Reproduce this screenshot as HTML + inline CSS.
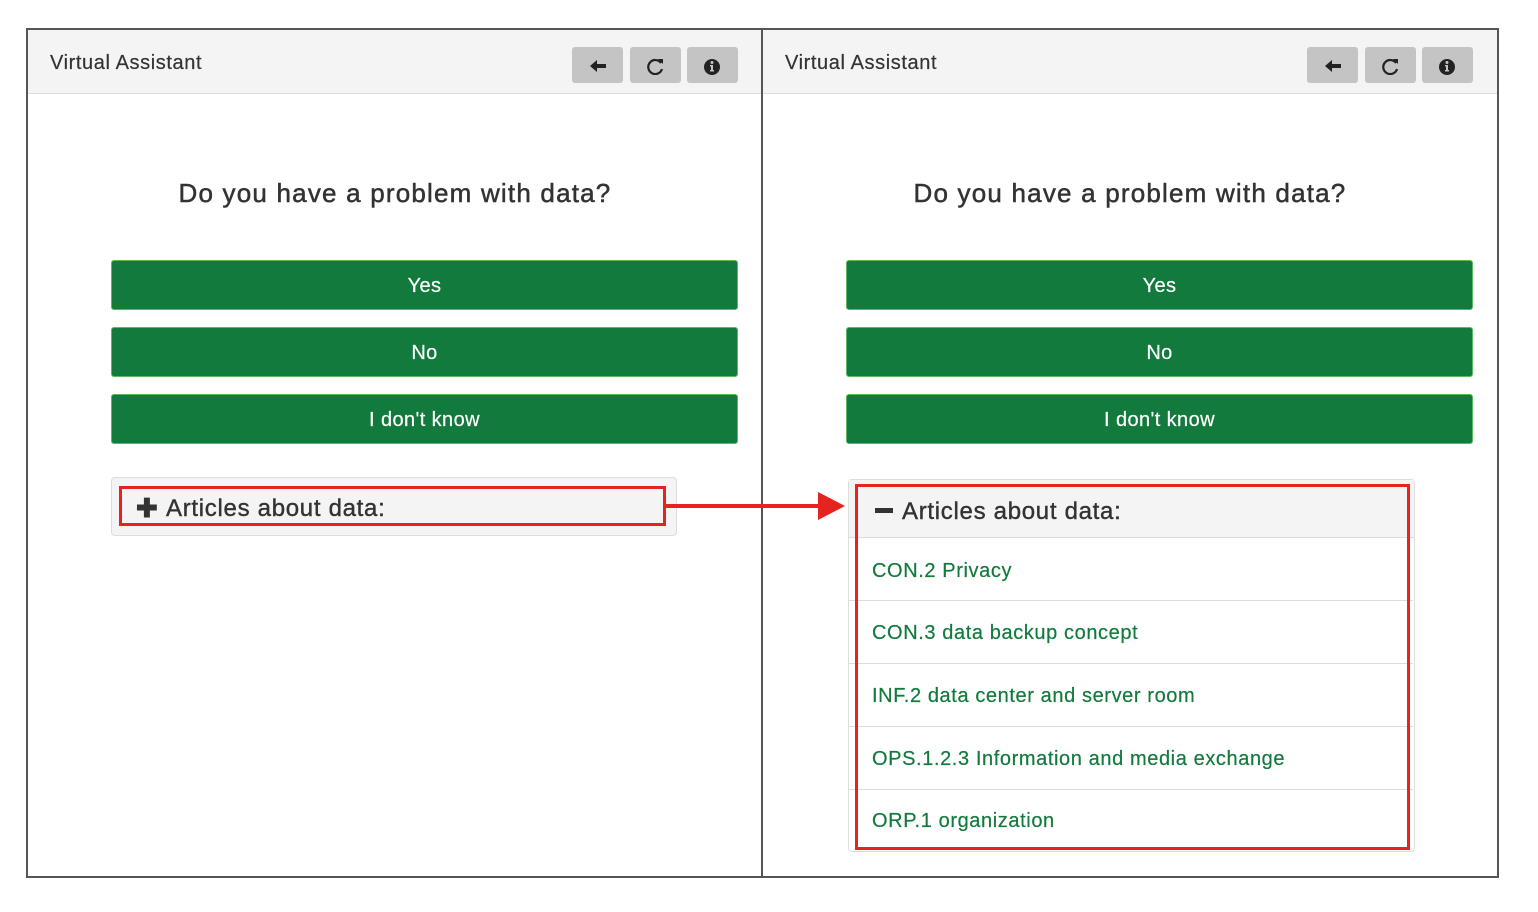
<!DOCTYPE html>
<html><head><meta charset="utf-8"><style>
*{box-sizing:border-box;margin:0;padding:0}
body{width:1538px;height:912px;background:#fff;position:relative;font-family:"Liberation Sans",Arial,sans-serif;overflow:hidden;color:#333}
.a{position:absolute}
.frame{left:26px;top:28px;width:1473px;height:850px;border:2px solid #555}
.div{left:761px;top:28px;width:2px;height:850px;background:#555}
.hdr{top:30px;height:64px;background:#f4f4f4;border-bottom:1px solid #ddd}
.ht{font-size:20px;top:52px;color:#333;letter-spacing:0.6px;-webkit-text-stroke:0.2px #333}
.ib{top:47px;width:51px;height:36px;background:#c4c4c4;border-radius:3px}
.ib svg{position:absolute;left:16px;top:10px}
.q{top:178px;font-size:26px;text-align:center;width:734px;letter-spacing:1.2px;-webkit-text-stroke:0.5px #333}
.gb{height:50px;width:627px;background:#127a3c;border:1px solid #5cb85c;border-radius:3px;color:#fff;font-size:20px;text-align:center;line-height:51px;letter-spacing:0.4px;-webkit-text-stroke:0.2px #fff}
.box{border:1px solid #ddd;border-radius:4px;background:#fff}
.red{border:3px solid #e5231f}
.lk{color:#127a3c;font-size:20px;left:872px;letter-spacing:0.6px;-webkit-text-stroke:0.2px #127a3c}
.sep{left:849px;width:564px;height:1px;background:#ddd}
.ah{font-size:24px;color:#333;letter-spacing:0.7px;-webkit-text-stroke:0.4px #333}
</style></head><body>
<div class="a frame"></div>
<div class="a hdr" style="left:28px;width:733px"></div>
<div class="a hdr" style="left:763px;width:734px"></div>
<div class="a div"></div>

<div class="a ht" style="left:50px">Virtual Assistant</div>
<div class="a ht" style="left:785px">Virtual Assistant</div>

<div class="a ib" style="left:572px"><svg width="20" height="18" viewBox="0 0 20 18"><path d="M2 9 L9 3 V7 H18 V11 H9 V15 Z" fill="#222"/></svg></div>
<div class="a ib" style="left:630px"><svg width="20" height="18" viewBox="0 0 20 18"><path d="M15 6 A7 7 0 1 0 16 12" fill="none" stroke="#222" stroke-width="2.2"/><path d="M12 2 L17 2 L17 7 Z" fill="#222"/></svg></div>
<div class="a ib" style="left:687px"><svg width="20" height="18" viewBox="0 0 20 18"><circle cx="9" cy="10" r="8" fill="#222"/><circle cx="9" cy="5.5" r="1.5" fill="#c4c4c4"/><path d="M7 8 H10 V13 H11 V14.5 H7 V13 H8 V9.5 H7 Z" fill="#c4c4c4"/></svg></div>
<div class="a ib" style="left:1307px"><svg width="20" height="18" viewBox="0 0 20 18"><path d="M2 9 L9 3 V7 H18 V11 H9 V15 Z" fill="#222"/></svg></div>
<div class="a ib" style="left:1365px"><svg width="20" height="18" viewBox="0 0 20 18"><path d="M15 6 A7 7 0 1 0 16 12" fill="none" stroke="#222" stroke-width="2.2"/><path d="M12 2 L17 2 L17 7 Z" fill="#222"/></svg></div>
<div class="a ib" style="left:1422px"><svg width="20" height="18" viewBox="0 0 20 18"><circle cx="9" cy="10" r="8" fill="#222"/><circle cx="9" cy="5.5" r="1.5" fill="#c4c4c4"/><path d="M7 8 H10 V13 H11 V14.5 H7 V13 H8 V9.5 H7 Z" fill="#c4c4c4"/></svg></div>

<div class="a q" style="left:28px">Do you have a problem with data?</div>
<div class="a q" style="left:763px">Do you have a problem with data?</div>

<div class="a gb" style="left:111px;top:260px">Yes</div>
<div class="a gb" style="left:111px;top:327px">No</div>
<div class="a gb" style="left:111px;top:394px">I don't know</div>
<div class="a gb" style="left:846px;top:260px">Yes</div>
<div class="a gb" style="left:846px;top:327px">No</div>
<div class="a gb" style="left:846px;top:394px">I don't know</div>

<div class="a box" style="left:111px;top:477px;width:566px;height:59px;background:#f4f4f4"></div>
<div class="a red" style="left:119px;top:486px;width:547px;height:40px"></div>
<div class="a" style="left:136px;top:496px;font-size:24px;color:#333"><b style="font-size:26px;line-height:24px">&#10010;</b></div>
<div class="a ah" style="left:166px;top:495px">Articles about data:</div>
<div class="a" style="left:666px;top:504px;width:156px;height:4px;background:#e5231f"></div>
<svg class="a" style="left:818px;top:492px" width="28" height="28"><path d="M0 0 L27 14 L0 28 Z" fill="#e5231f"/></svg>

<div class="a box" style="left:848px;top:479px;width:567px;height:373px"></div>
<div class="a" style="left:849px;top:480px;width:565px;height:58px;background:#f4f4f4;border-bottom:1px solid #ddd"></div>
<div class="a" style="left:875px;top:508px;width:18px;height:5px;background:#333"></div>
<div class="a ah" style="left:902px;top:498px">Articles about data:</div>
<div class="a sep" style="top:600px"></div>
<div class="a sep" style="top:663px"></div>
<div class="a sep" style="top:726px"></div>
<div class="a sep" style="top:789px"></div>
<div class="a lk" style="top:560px">CON.2 Privacy</div>
<div class="a lk" style="top:622px">CON.3 data backup concept</div>
<div class="a lk" style="top:685px">INF.2 data center and server room</div>
<div class="a lk" style="top:748px">OPS.1.2.3 Information and media exchange</div>
<div class="a lk" style="top:810px">ORP.1 organization</div>
<div class="a red" style="left:855px;top:484px;width:555px;height:366px"></div>
</body></html>
